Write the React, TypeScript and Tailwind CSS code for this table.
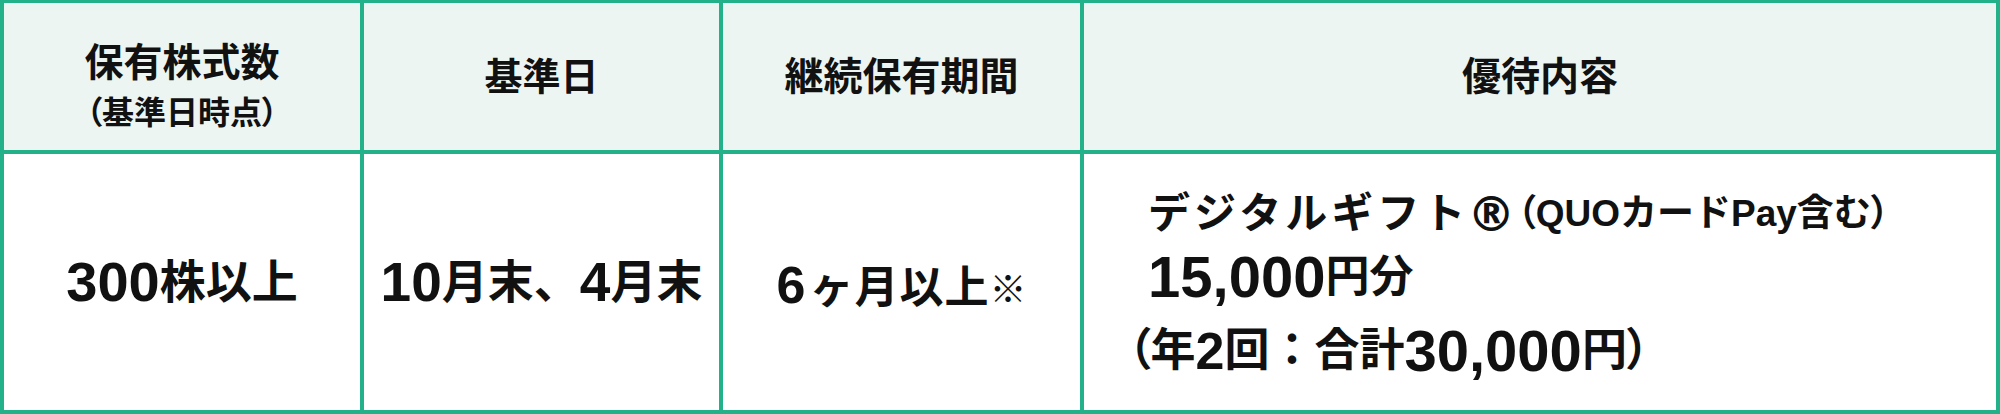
import React from "react";

const headCell = "flex flex-col items-center justify-center bg-[#edf5f2] font-bold";
const bodyCell = "flex items-center justify-center bg-white font-bold";
const cjk = "font-['Noto_Sans_CJK_JP',sans-serif]";

export default function App() {
  return (
    <div className="w-[2000px] h-[414px] bg-white">
      <div className="grid grid-cols-[356px_355px_357px_912px] grid-rows-[147px_256px] gap-[4px] bg-[#23b18a] px-[4px] pt-[3px] pb-[4px] text-[#111] font-['Liberation_Sans','Noto_Sans_CJK_JP',sans-serif]">
        {/* header row */}
        <div className={`${headCell} pt-[18px]`}>
          <div className="text-[39px] leading-[47px]">保有株式数</div>
          <div className="mt-[8px] text-[32px] leading-[38px] [font-feature-settings:'palt']">
            （基準日時点）
          </div>
        </div>
        <div className={headCell}>
          <div className="text-[38px] leading-[46px]">基準日</div>
        </div>
        <div className={headCell}>
          <div className="text-[39px] leading-[46px]">継続保有期間</div>
        </div>
        <div className={headCell}>
          <div className="text-[39px] leading-[46px]">優待内容</div>
        </div>

        {/* body row */}
        <div className={bodyCell}>
          <span className="text-[56px] leading-none">300</span>
          <span className="text-[46px] leading-none">株以上</span>
        </div>
        <div className={bodyCell}>
          <span className="text-[55px] leading-none">10</span>
          <span className="text-[46px] leading-none">月末、</span>
          <span className="text-[55px] leading-none">4</span>
          <span className="text-[46px] leading-none">月末</span>
        </div>
        <div className={`${bodyCell} pt-[6px]`}>
          <div className="flex items-baseline">
            <span className="text-[52px] leading-none mr-[4px]">6</span>
            <span className="text-[44px] leading-none tracking-[1px]">ヶ月以上</span>
            <span className={`text-[37px] leading-none font-black ${cjk}`}>※</span>
          </div>
        </div>
        <div className="flex flex-col justify-center bg-white pl-[64px] font-bold">
          <div className="h-[60px] flex items-center whitespace-nowrap">
            <span className="text-[42px] tracking-[4px]">デジタルギフト</span>
            <span className="text-[48px] leading-none font-['DejaVu_Sans',sans-serif] -ml-[2px] mr-[2px]">®</span>
            <span className="text-[37px] [font-feature-settings:'palt']">（</span>
            <span className="text-[37px]">QUOカードPay含む</span>
            <span className="text-[37px] [font-feature-settings:'palt']">）</span>
          </div>
          <div className="h-[66px] flex items-center whitespace-nowrap">
            <span className="text-[58px] leading-none">15,000</span>
            <span className="text-[44px] leading-none">円分</span>
          </div>
          <div className="mt-[11px] h-[60px] -ml-[20px] flex items-center whitespace-nowrap">
            <span className="text-[45px] leading-none [font-feature-settings:'palt']">（</span>
            <span className="text-[45px] leading-none">年</span>
            <span className="text-[52px] leading-none">2</span>
            <span className="text-[45px] leading-none">回：合計</span>
            <span className="text-[58px] leading-none">30,000</span>
            <span className="text-[45px] leading-none">円</span>
            <span className="text-[45px] leading-none [font-feature-settings:'palt']">）</span>
          </div>
        </div>
      </div>
    </div>
  );
}
